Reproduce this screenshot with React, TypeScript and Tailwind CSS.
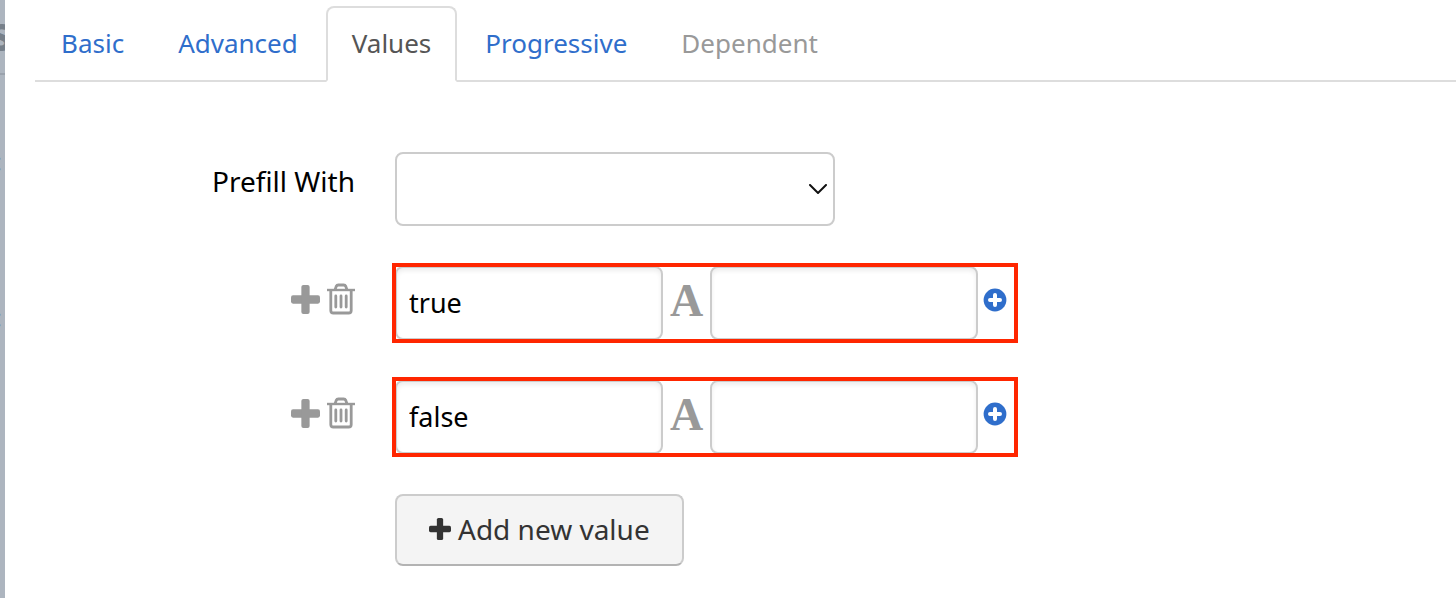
import { useState } from 'react';
import clsx from 'clsx';

interface ValueRow {
  id: number;
  value: string;
  label: string;
}

const tabs = [
  { name: 'Basic' },
  { name: 'Advanced' },
  { name: 'Values' },
  { name: 'Progressive' },
  { name: 'Dependent', disabled: true },
];

function PlusIcon({ className }: { className: string }) {
  return (
    <svg viewBox="0 0 28 28" fill="currentColor" className={className} aria-hidden="true">
      <rect x="0" y="10" width="28" height="8" rx="2" />
      <rect x="10" y="0" width="8" height="28" rx="2" />
    </svg>
  );
}

function TrashIcon() {
  return (
    <svg viewBox="0 0 28 32" fill="none" stroke="currentColor" className="h-8 w-7" aria-hidden="true">
      <path d="M0 7H28" strokeWidth="2.4" />
      <path d="M8 7L9.2 3.4Q9.8 2 11.4 2H16.6Q18.2 2 18.8 3.4L20 7" strokeWidth="2.8" />
      <path d="M3.8 7V27.4Q3.8 30 6.4 30H21.6Q24.2 30 24.2 27.4V7" strokeWidth="2.8" />
      <path d="M8.8 13V24M14 13V24M19.2 13V24" strokeWidth="2.8" strokeLinecap="round" />
    </svg>
  );
}

function PlusCircleIcon() {
  return (
    <svg viewBox="0 0 24 24" className="size-6" aria-hidden="true">
      <circle cx="12" cy="12" r="11.4" fill="currentColor" />
      <path d="M12 7V17M7 12H17" stroke="#fff" strokeWidth="4" strokeLinecap="round" />
    </svg>
  );
}

const inputClass =
  'h-[74px] w-[268px] rounded-lg border-2 border-[#ccc] bg-white px-3 pb-0.5 text-[27px] text-black shadow-[inset_0_3px_4px_rgba(0,0,0,0.07)] outline-none';

export default function App() {
  const [active, setActive] = useState('Values');
  const [rows, setRows] = useState<ValueRow[]>([
    { id: 1, value: 'true', label: '' },
    { id: 2, value: 'false', label: '' },
  ]);

  const addRow = () => {
    setRows([...rows, { id: Date.now(), value: '', label: '' }]);
  };

  const removeRow = (id: number) => {
    setRows(rows.filter((row) => row.id !== id));
  };

  const updateRow = (id: number, patch: Partial<ValueRow>) => {
    setRows(rows.map((row) => (row.id === id ? { ...row, ...patch } : row)));
  };

  return (
    <div className="flex min-h-screen bg-white font-['Noto_Sans',sans-serif]">
      {/* Dimmed page behind the dialog */}
      <div className="flex w-[5px] shrink-0 flex-col items-end overflow-hidden bg-[#adb5bf] text-[#77808a]" aria-hidden="true">
        <div className="flex h-[75px] flex-col items-end border-b-2 border-[#9aa2ac]">
          <span className="-mr-2 text-[48px] leading-[66px] font-bold">s</span>
        </div>
        <span className="mt-[68px] pr-[3px] text-[26px] leading-9 text-[#555c66]">:</span>
        <span className="mt-[120px] pr-[3px] text-[26px] leading-9 text-[#555c66]">:</span>
      </div>

      <div className="min-w-0 flex-1 pt-1.5 pl-[30px]">
        <nav className="flex gap-0.5 border-b-2 border-[#ddd]">
          {tabs.map((tab) => (
            <button
              key={tab.name}
              type="button"
              disabled={tab.disabled}
              onClick={() => setActive(tab.name)}
              className={clsx(
                '-mb-0.5 h-[76px] rounded-t-lg border-2 px-6 pb-0.5 text-[26px]',
                tab.name === active
                  ? 'border-[#ddd] border-b-white bg-white text-[#555]'
                  : 'border-transparent',
                tab.name !== active && (tab.disabled ? 'text-[#999]' : 'text-[#2f6ecb]')
              )}
            >
              {tab.name}
            </button>
          ))}
        </nav>

        <form className="flex flex-col gap-10 pt-[70px]" onSubmit={(e) => e.preventDefault()}>
          <div className="flex gap-10">
            <label htmlFor="prefill" className="w-80 text-right text-[28px] leading-[58px] text-black">
              Prefill With
            </label>
            <div className="relative">
              <select
                id="prefill"
                className="h-[74px] w-[440px] appearance-none rounded-lg border-2 border-[#ccc] bg-white px-3 text-[28px] text-black outline-none"
              >
                <option value=""></option>
              </select>
              <svg
                viewBox="0 0 18 10"
                fill="none"
                stroke="#111"
                strokeWidth="2"
                className="pointer-events-none absolute top-8 right-2 h-2.5 w-[18px]"
                aria-hidden="true"
              >
                <path d="M1 1L9 9L17 1" strokeLinecap="round" />
              </svg>
            </div>
          </div>

          {rows.map((row) => (
            <div key={row.id} className="flex gap-10">
              <div className="flex h-[66px] w-80 items-center justify-end gap-[7px] text-[#999]">
                <button type="button" aria-label="Insert value" onClick={addRow}>
                  <PlusIcon className="size-[29px]" />
                </button>
                <button type="button" aria-label="Delete value" onClick={() => removeRow(row.id)}>
                  <TrashIcon />
                </button>
              </div>
              <div className="relative flex">
                <input
                  type="text"
                  aria-label="Value"
                  value={row.value}
                  onChange={(e) => updateRow(row.id, { value: e.target.value })}
                  className={inputClass}
                />
                <button
                  type="button"
                  aria-label="Label text"
                  className="h-[70px] w-[47px] text-center font-['Liberation_Serif',serif] text-[46px] leading-[70px] font-bold text-[#999]"
                >
                  A
                </button>
                <input
                  type="text"
                  aria-label="Label"
                  value={row.label}
                  onChange={(e) => updateRow(row.id, { label: e.target.value })}
                  className={inputClass}
                />
                <button type="button" aria-label="Add label" className="ml-[5px] h-[68px] text-[#2f6ecb]">
                  <PlusCircleIcon />
                </button>
                {/* Red highlight around the pair of fields */}
                <div className="pointer-events-none absolute -top-[3px] -right-[11px] -bottom-[3px] -left-[3px] border-4 border-[#ff2600]"></div>
              </div>
            </div>
          ))}

          <div className="flex pl-[360px]">
            <button
              type="button"
              onClick={addRow}
              className="flex h-[72px] items-center gap-[7px] rounded-lg border-2 border-[#ccc] border-b-[#b3b3b3] bg-[#f4f4f4] px-8 pb-0.5 text-[28px] text-[#333]"
            >
              <PlusIcon className="size-[22px]" />
              Add new value
            </button>
          </div>
        </form>
      </div>
    </div>
  );
}
